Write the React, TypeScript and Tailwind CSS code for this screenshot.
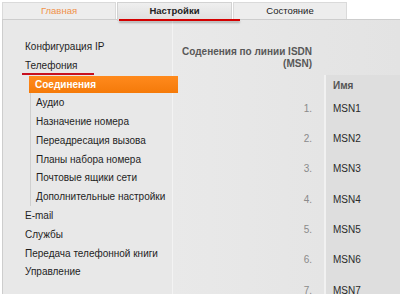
import React from 'react';

const topItems = ['Конфигурация IP', 'Телефония'];
const subItems = [
  'Аудио',
  'Назначение номера',
  'Переадресация вызова',
  'Планы набора номера',
  'Почтовые ящики сети',
  'Дополнительные настройки',
];
const bottomItems = ['E-mail', 'Службы', 'Передача телефонной книги', 'Управление'];
const rows = [1, 2, 3, 4, 5, 6, 7];

export default function App() {
  return (
    <div className="w-[400px] h-[294px] bg-white overflow-hidden font-['Liberation_Sans',Arial,sans-serif] flex flex-col">
      {/* Tabs */}
      <div className="flex pl-[2px] pt-[2px] gap-[1px] h-[19px] shrink-0 relative z-10">
        <div className="w-[114px] h-[17px] bg-[#ededed] border border-b-0 border-[#dadada] flex items-center justify-center text-[9.5px] text-[#f0924a]">
          Главная
        </div>
        <div className="w-[115px] h-[19px] bg-gradient-to-b from-[#efefef] to-[#dedede] border border-b-0 border-[#d2d2d2] flex flex-col">
          <div className="flex-1 flex items-center justify-center text-[9.5px] text-[#222] font-semibold pt-[1px]">Настройки</div>
          <div className="h-[2px] w-[121px] bg-[#d40000] shadow-[0_2px_2px_rgba(0,0,0,0.25)] ml-[1px]" />
        </div>
        <div className="w-[114px] h-[17px] bg-[#ededed] border border-b-0 border-[#dadada] flex items-center justify-center text-[9.5px] text-[#222]">
          Состояние
        </div>
      </div>

      {/* Panel */}
      <div className="flex-1 flex ml-[2px] border-l border-t border-[#cdcdcd] bg-[#e8e8e8]">
        {/* Sidebar */}
        <div className="w-[170px] shrink-0 border-r border-[#f3f3f3] pt-[17px] text-[10px] text-[#1e1e1e]">
          <div className="h-[18.8px] flex items-center pl-[22px]">{topItems[0]}</div>
          <div className="h-[18.8px] flex items-end pl-[19px]">
            <span className="inline-block border-b-2 border-[#c8101e] pl-[3px] pr-[16px] leading-[15px]">{topItems[1]}</span>
          </div>
          <div className="ml-[26px] relative -mr-[6px]">
            <div className="h-[17px] mt-[1px] mb-[0.8px] bg-gradient-to-b from-[#ff8a1c] to-[#f57a08] text-white font-bold flex items-center pl-[6px]">
              Соединения
            </div>
            <div className="border-l border-[#cfcfcf] ml-[1px]">
              {subItems.map((s) => (
                <div key={s} className="h-[18.8px] flex items-center pl-[5px] whitespace-nowrap">{s}</div>
              ))}
            </div>
          </div>
          {bottomItems.map((s) => (
            <div key={s} className="h-[18.8px] flex items-center pl-[22px]">{s}</div>
          ))}
        </div>

        {/* Main */}
        <div className="flex-1 flex flex-col bg-gradient-to-r from-[#e9e9e9] to-[#e3e3e3]">
          <div className="w-[151px] text-right pr-[12px] pt-[26px] text-[10px] leading-[12px] font-bold text-[#585858]">
            Соденения по линии ISDN (MSN)
          </div>
          <div className="mt-[5px] flex-1 grid grid-cols-[151px_1fr] text-[10px]">
            <div className="flex flex-col">
              <div className="h-[18px]" />
              {rows.map((n) => (
                <div key={n} className="h-[30.33px] flex items-center justify-end pr-[12px] text-[#8a8a8a]">
                  {n}.
                </div>
              ))}
            </div>
            <div className="flex flex-col bg-[#dedede] border-l-2 border-[#f1f1f1]">
              <div className="h-[18px] pt-[4px] pl-[7px] leading-[14px] font-bold text-[#555]">Имя</div>
              {rows.map((n) => (
                <div key={n} className="h-[30.33px] flex items-center pl-[7px] text-[#2a2a2a]">
                  MSN{n}
                </div>
              ))}
            </div>
          </div>
        </div>
      </div>
    </div>
  );
}
